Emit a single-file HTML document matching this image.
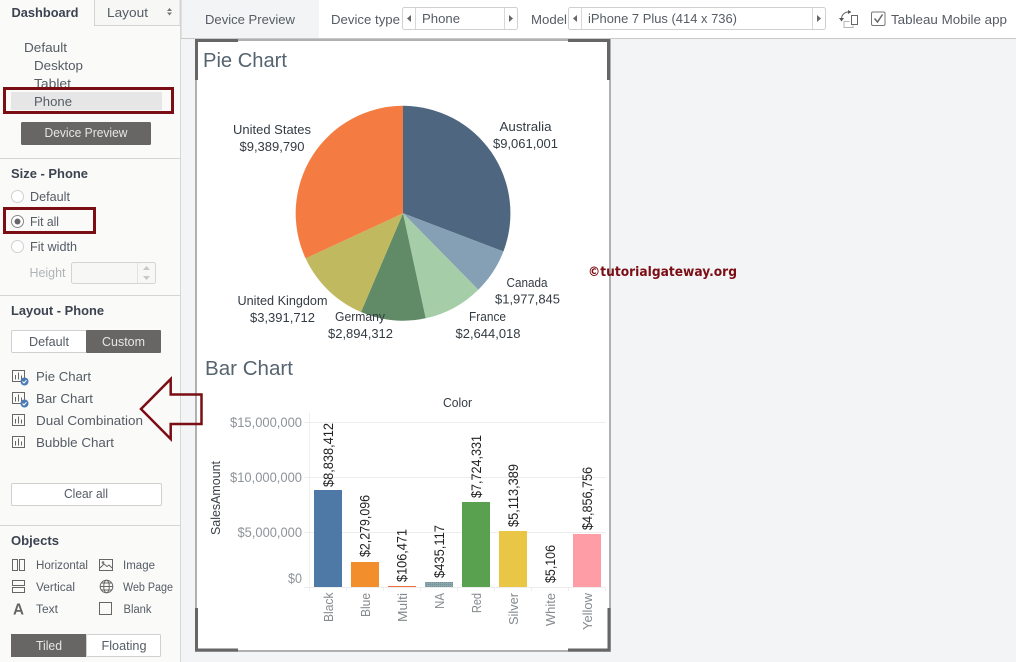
<!DOCTYPE html>
<html><head><meta charset="utf-8"><title>Device Preview</title>
<style>
html,body{margin:0;padding:0;background:#f3f4f6;width:1016px;height:662px;overflow:hidden}
svg{display:block;position:absolute;left:0;top:0}
text{font-family:"Liberation Sans",sans-serif;font-size:12.5px;fill:#555c64}
.b{font-weight:bold;fill:#3c4350;font-size:13px}
.t{font-size:20.5px;fill:#56646f}
.l{fill:#333b42;font-size:13px}
.a{fill:#8e9499;font-size:13.5px}
.v{fill:#222;font-size:13.5px}
.c{fill:#858a8e;font-size:13px}
</style></head><body>
<svg width="1016" height="662" viewBox="0 0 1016 662" xmlns="http://www.w3.org/2000/svg">
<defs><g id="ci"><rect x="12.500" y="0.500" width="12" height="11" fill="none" stroke="#666"/><path d="M15.500 5v4.500M18.500 2.500v7M21.500 5.500v4" stroke="#666" fill="none"/></g>
<g id="ck"><circle cx="24.500" cy="11.500" r="4" fill="#4a7ab5"/><path d="M22.500 11.500l1.500 1.500 2.500-2.800" stroke="#fff" fill="none"/></g>
<pattern id="na" width="2" height="2" patternUnits="userSpaceOnUse"><rect width="2" height="2" fill="#8aa6ab"/><rect width="1" height="1" fill="#6f9098"/></pattern></defs>

<!-- base -->
<rect width="1016" height="662" fill="#f3f4f6"/>
<rect x="0" y="0" width="180" height="662" fill="#fafaf9"/>
<rect x="180" y="0" width="1" height="662" fill="#d6d6d6"/>
<rect x="319" y="0" width="697" height="38" fill="#fff"/>
<rect x="181" y="38" width="835" height="1" fill="#c9c9c9"/>
<rect x="181" y="0" width="1" height="38" fill="#e0e0e0"/>

<!-- tabs -->
<rect x="94.500" y="-1" width="85.500" height="26.500" fill="#f7f7f6" stroke="#d4d4d4"/>
<text x="11.500" y="17" class="b" textLength="67" lengthAdjust="spacingAndGlyphs">Dashboard</text>
<text x="107" y="17" textLength="41" lengthAdjust="spacingAndGlyphs" style="font-size:13px">Layout</text>
<path d="M167 11l2.500-3 2.500 3zM167 12.500l2.500 3 2.500-3z" fill="#777"/>

<!-- device list -->
<text x="24" y="52" textLength="43" lengthAdjust="spacingAndGlyphs" style="font-size:13px">Default</text>
<text x="34" y="70" textLength="49" lengthAdjust="spacingAndGlyphs" style="font-size:13px">Desktop</text>
<text x="34" y="88" textLength="37" lengthAdjust="spacingAndGlyphs" style="font-size:13px">Tablet</text>
<rect x="11" y="92" width="151" height="18" fill="#e6e6e6"/>
<text x="34" y="106" textLength="38" lengthAdjust="spacingAndGlyphs" style="font-size:13px">Phone</text>
<rect x="21" y="122" width="130" height="23" rx="1.500" fill="#686664"/>
<text x="44.500" y="137" textLength="83" lengthAdjust="spacingAndGlyphs" style="fill:#e6e6e6">Device Preview</text>
<rect x="0" y="158" width="180" height="1" fill="#d4d4d4"/>

<!-- size -->
<text x="11" y="178" class="b" textLength="77" lengthAdjust="spacingAndGlyphs">Size - Phone</text>
<circle cx="17.500" cy="196.500" r="6" fill="#fff" stroke="#d0d0d0"/>
<text x="30" y="201" textLength="40" lengthAdjust="spacingAndGlyphs">Default</text>
<circle cx="17.500" cy="221.500" r="6" fill="#fff" stroke="#888"/>
<circle cx="17.500" cy="221.500" r="3" fill="#666"/>
<text x="30" y="226" textLength="29" lengthAdjust="spacingAndGlyphs">Fit all</text>
<circle cx="17.500" cy="246.500" r="6" fill="#fff" stroke="#d0d0d0"/>
<text x="30" y="251" textLength="47" lengthAdjust="spacingAndGlyphs">Fit width</text>
<text x="29.500" y="277" textLength="36" lengthAdjust="spacingAndGlyphs" style="fill:#b0b3b6">Height</text>
<rect x="71.500" y="262.500" width="84" height="21" rx="2" fill="#f7f7f6" stroke="#d4d4d4"/>
<path d="M137.500 263v20" stroke="#e2e2e2"/>
<path d="M143 270l3.500-4 3.500 4z" fill="#c8c8c8"/><path d="M143 276l3.500 4 3.500-4z" fill="#c8c8c8"/>
<rect x="0" y="295" width="180" height="1" fill="#d4d4d4"/>

<!-- layout -->
<text x="11" y="315" class="b" textLength="93" lengthAdjust="spacingAndGlyphs">Layout - Phone</text>
<rect x="11.500" y="330.500" width="75" height="22" rx="1.500" fill="#fff" stroke="#d0d0d0"/>
<rect x="86" y="330" width="75" height="23" rx="1" fill="#686664"/>
<text x="29" y="346" textLength="40" lengthAdjust="spacingAndGlyphs">Default</text>
<text x="102" y="346" textLength="43" lengthAdjust="spacingAndGlyphs" style="fill:#e6e6e6">Custom</text>
<g transform="translate(0,370)"><use href="#ci"/><use href="#ck"/></g>
<text x="36" y="381" textLength="55" lengthAdjust="spacingAndGlyphs" style="font-size:13px">Pie Chart</text>
<g transform="translate(0,392)"><use href="#ci"/><use href="#ck"/></g>
<text x="36" y="403" textLength="57" lengthAdjust="spacingAndGlyphs" style="font-size:13px">Bar Chart</text>
<g transform="translate(0,414)"><use href="#ci"/></g>
<text x="36" y="425" textLength="107" lengthAdjust="spacingAndGlyphs" style="font-size:13px">Dual Combination</text>
<g transform="translate(0,436)"><use href="#ci"/></g>
<text x="36" y="447" textLength="78" lengthAdjust="spacingAndGlyphs" style="font-size:13px">Bubble Chart</text>
<rect x="11.500" y="483.500" width="150" height="22" rx="1.500" fill="#fff" stroke="#d0d0d0"/>
<text x="64" y="498" textLength="44" lengthAdjust="spacingAndGlyphs">Clear all</text>
<rect x="0" y="525" width="180" height="1" fill="#d4d4d4"/>

<!-- objects -->
<text x="11" y="545" class="b" textLength="48" lengthAdjust="spacingAndGlyphs">Objects</text>
<g fill="none" stroke="#666">
<rect x="12.500" y="559.500" width="5" height="11"/><rect x="19.500" y="559.500" width="5" height="11"/>
<rect x="12.500" y="580.500" width="12" height="5"/><rect x="12.500" y="587.500" width="12" height="5"/>
<rect x="99.500" y="559.500" width="13" height="11"/><path d="M100 568l4-4 3 2.500 2-1.500 3 3"/><circle cx="103" cy="562.500" r="0.800"/>
<circle cx="106.500" cy="586.500" r="6.300"/><ellipse cx="106.500" cy="586.500" rx="2.800" ry="6.300"/><path d="M100.500 586.500h12M101.500 583h10M101.500 590h10"/>
<rect x="99.500" y="602.500" width="12" height="12"/>
</g>
<text x="13" y="614.500" style="font-size:16px;fill:#666;font-weight:bold" textLength="11" lengthAdjust="spacingAndGlyphs">A</text>
<text x="36" y="569" textLength="52" lengthAdjust="spacingAndGlyphs" style="font-size:11.500px">Horizontal</text>
<text x="36" y="591" textLength="39" lengthAdjust="spacingAndGlyphs" style="font-size:11.500px">Vertical</text>
<text x="36" y="613" textLength="22" lengthAdjust="spacingAndGlyphs" style="font-size:11.500px">Text</text>
<text x="123" y="569" textLength="32" lengthAdjust="spacingAndGlyphs" style="font-size:11.500px">Image</text>
<text x="123" y="591" textLength="50" lengthAdjust="spacingAndGlyphs" style="font-size:11.500px">Web Page</text>
<text x="123.500" y="613" textLength="28" lengthAdjust="spacingAndGlyphs" style="font-size:11.500px">Blank</text>
<rect x="11" y="634" width="75" height="23" fill="#686664"/>
<rect x="86.500" y="634.500" width="74" height="22" rx="1" fill="#fff" stroke="#d0d0d0"/>
<text x="36" y="650" textLength="26" lengthAdjust="spacingAndGlyphs" style="fill:#e6e6e6">Tiled</text>
<text x="101.500" y="650" textLength="45" lengthAdjust="spacingAndGlyphs">Floating</text>

<!-- top bar -->
<text x="205" y="24" textLength="90" lengthAdjust="spacingAndGlyphs" style="font-size:13px">Device Preview</text>
<text x="331" y="24" textLength="69" lengthAdjust="spacingAndGlyphs" style="font-size:13px">Device type</text>
<rect x="402.500" y="7.500" width="115" height="22" rx="2" fill="#fff" stroke="#d0d0d0"/>
<path d="M415.500 8v21M504.500 8v21" stroke="#d8d8d8"/>
<path d="M411 15v7l-4-3.500z" fill="#666"/><path d="M509 15v7l4-3.500z" fill="#666"/>
<text x="422" y="23" textLength="38" lengthAdjust="spacingAndGlyphs" style="font-size:13px">Phone</text>
<text x="531" y="24" textLength="36" lengthAdjust="spacingAndGlyphs" style="font-size:13px">Model</text>
<rect x="568.500" y="7.500" width="257" height="22" rx="2" fill="#fff" stroke="#d0d0d0"/>
<path d="M581.500 8v21M812.500 8v21" stroke="#d8d8d8"/>
<path d="M577 15v7l-4-3.500z" fill="#666"/><path d="M817 15v7l4-3.500z" fill="#666"/>
<text x="588" y="23" textLength="149" lengthAdjust="spacingAndGlyphs" style="font-size:13px">iPhone 7 Plus (414 x 736)</text>
<path d="M849.500 21.500h-5.500v6h9v-2" fill="none" stroke="#b5b5b5"/>
<rect x="851.500" y="15.500" width="6" height="9" fill="#fff" stroke="#666"/>
<path d="M841.500 19c0-4 3-7 7-7" fill="none" stroke="#666"/>
<path d="M839 18h5l-2.500 3.500zM848 10l3.500 2-3.500 2z" fill="#555"/>
<rect x="871.500" y="12" width="13.500" height="13.500" rx="1.500" fill="#fff" stroke="#777"/>
<path d="M874.500 18.500l3 3.500 5-7.500" fill="none" stroke="#666" stroke-width="1.500"/>
<text x="891" y="24" textLength="116" lengthAdjust="spacingAndGlyphs" style="font-size:13px">Tableau Mobile app</text>

<!-- device frame -->
<rect x="196" y="40" width="414" height="611" fill="#fff" stroke="#b0b0b0" stroke-width="2"/>
<path d="M196.500 80V40.500H238M568 40.500H608.500V80M196.500 608V650H238M568 650H609V608" fill="none" stroke="#666" stroke-width="3"/>

<text x="203" y="67" class="t" textLength="84" lengthAdjust="spacingAndGlyphs">Pie Chart</text>
<text x="205" y="375" class="t" textLength="88" lengthAdjust="spacingAndGlyphs">Bar Chart</text>

<!-- pie -->
<path d="M403 213.300V105.800A107.500 107.500 0 0 1 503.400 251.500Z" fill="#4e667f"/>
<path d="M403 213.300L503.400 251.500A107.500 107.500 0 0 1 478.300 289.700Z" fill="#85a0b4"/>
<path d="M403 213.300L478.300 289.700A107.500 107.500 0 0 1 425.700 318.300Z" fill="#a5cea8"/>
<path d="M403 213.300L425.700 318.300A107.500 107.500 0 0 1 361 312Z" fill="#618b66"/>
<path d="M403 213.300L361 312A107.500 107.500 0 0 1 305.600 258.400Z" fill="#c0b95f"/>
<path d="M403 213.300L305.600 258.400A107.500 107.500 0 0 1 403 105.800Z" fill="#f47c42"/>

<text x="233" y="134" class="l" textLength="78" lengthAdjust="spacingAndGlyphs">United States</text>
<text x="239.500" y="151" class="l" textLength="65" lengthAdjust="spacingAndGlyphs">$9,389,790</text>
<text x="499.500" y="131" class="l" textLength="52" lengthAdjust="spacingAndGlyphs">Australia</text>
<text x="493" y="148" class="l" textLength="65" lengthAdjust="spacingAndGlyphs">$9,061,001</text>
<text x="506.500" y="287" class="l" textLength="41" lengthAdjust="spacingAndGlyphs">Canada</text>
<text x="495" y="303.500" class="l" textLength="65" lengthAdjust="spacingAndGlyphs">$1,977,845</text>
<text x="469" y="321" class="l" textLength="37" lengthAdjust="spacingAndGlyphs">France</text>
<text x="455.500" y="338" class="l" textLength="65" lengthAdjust="spacingAndGlyphs">$2,644,018</text>
<text x="335" y="321" class="l" textLength="50" lengthAdjust="spacingAndGlyphs">Germany</text>
<text x="328" y="338" class="l" textLength="65" lengthAdjust="spacingAndGlyphs">$2,894,312</text>
<text x="237.500" y="305" class="l" textLength="90" lengthAdjust="spacingAndGlyphs">United Kingdom</text>
<text x="250" y="322" class="l" textLength="65" lengthAdjust="spacingAndGlyphs">$3,391,712</text>

<!-- bar chart -->
<text x="443" y="407" class="l" textLength="29" lengthAdjust="spacingAndGlyphs">Color</text>
<path d="M309.500 412V591" stroke="#f0f0f0"/>
<path d="M304 422.500H606M304 477.500H606M304 532.500H606M304 587.500H606" stroke="#ededed"/>
<path d="M346.500 587v4M383.500 587v4M420.500 587v4M457.500 587v4M494.500 587v4M531.500 587v4M568.500 587v4M605.500 587v4" stroke="#eee"/>
<text x="230" y="427" class="a" textLength="72" lengthAdjust="spacingAndGlyphs">$15,000,000</text>
<text x="230" y="482" class="a" textLength="72" lengthAdjust="spacingAndGlyphs">$10,000,000</text>
<text x="237.500" y="537" class="a" textLength="64.500" lengthAdjust="spacingAndGlyphs">$5,000,000</text>
<text x="288" y="583" class="a" textLength="14" lengthAdjust="spacingAndGlyphs">$0</text>
<text transform="translate(220,535) rotate(-90)" class="l" style="font-size:12.500px;fill:#3a3f46" textLength="74" lengthAdjust="spacingAndGlyphs">SalesAmount</text>

<rect x="314" y="490" width="28" height="97" fill="#4e79a7"/>
<rect x="351" y="562" width="28" height="25" fill="#f28e2b"/>
<rect x="388" y="586" width="28" height="1" fill="#f0703a"/>
<rect x="425" y="582" width="28" height="5" fill="url(#na)"/>
<rect x="462" y="502" width="28" height="85" fill="#59a14f"/>
<rect x="499" y="531" width="28" height="56" fill="#e9c645"/>
<rect x="573" y="534" width="28" height="53" fill="#ff9da7"/>

<text transform="translate(333,487) rotate(-90)" class="v" textLength="64" lengthAdjust="spacingAndGlyphs">$8,838,412</text>
<text transform="translate(369.500,557) rotate(-90)" class="v" textLength="62" lengthAdjust="spacingAndGlyphs">$2,279,096</text>
<text transform="translate(406.500,582) rotate(-90)" class="v" textLength="53" lengthAdjust="spacingAndGlyphs">$106,471</text>
<text transform="translate(444,578) rotate(-90)" class="v" textLength="53" lengthAdjust="spacingAndGlyphs">$435,117</text>
<text transform="translate(481,498) rotate(-90)" class="v" textLength="63" lengthAdjust="spacingAndGlyphs">$7,724,331</text>
<text transform="translate(518,527) rotate(-90)" class="v" textLength="63" lengthAdjust="spacingAndGlyphs">$5,113,389</text>
<text transform="translate(555,583) rotate(-90)" class="v" textLength="38" lengthAdjust="spacingAndGlyphs">$5,106</text>
<text transform="translate(592,530) rotate(-90)" class="v" textLength="63" lengthAdjust="spacingAndGlyphs">$4,856,756</text>

<text transform="translate(333,622) rotate(-90)" class="c" textLength="29.500" lengthAdjust="spacingAndGlyphs">Black</text>
<text transform="translate(370,617) rotate(-90)" class="c" textLength="24" lengthAdjust="spacingAndGlyphs">Blue</text>
<text transform="translate(407,622) rotate(-90)" class="c" textLength="29" lengthAdjust="spacingAndGlyphs">Multi</text>
<text transform="translate(444,609) rotate(-90)" class="c" textLength="16" lengthAdjust="spacingAndGlyphs">NA</text>
<text transform="translate(481,613) rotate(-90)" class="c" textLength="20" lengthAdjust="spacingAndGlyphs">Red</text>
<text transform="translate(518,625) rotate(-90)" class="c" textLength="32" lengthAdjust="spacingAndGlyphs">Silver</text>
<text transform="translate(555,626) rotate(-90)" class="c" textLength="33" lengthAdjust="spacingAndGlyphs">White</text>
<text transform="translate(592,630) rotate(-90)" class="c" textLength="37" lengthAdjust="spacingAndGlyphs">Yellow</text>

<text x="588" y="276" textLength="149" lengthAdjust="spacingAndGlyphs" style="font-family:'DejaVu Sans',sans-serif;font-weight:bold;font-size:13.500px;fill:#7b0d14">©tutorialgateway.org</text>

<!-- annotations -->
<rect x="4.500" y="88.500" width="168" height="24" fill="none" stroke="#7b0d14" stroke-width="3"/>
<rect x="4.500" y="208.500" width="90" height="24" fill="none" stroke="#7b0d14" stroke-width="3"/>
<path d="M141 409L170.700 379V394.500H201.500V424H170.700V439Z" fill="none" stroke="#7b0d14" stroke-width="2.500"/>
</svg>
</body></html>
